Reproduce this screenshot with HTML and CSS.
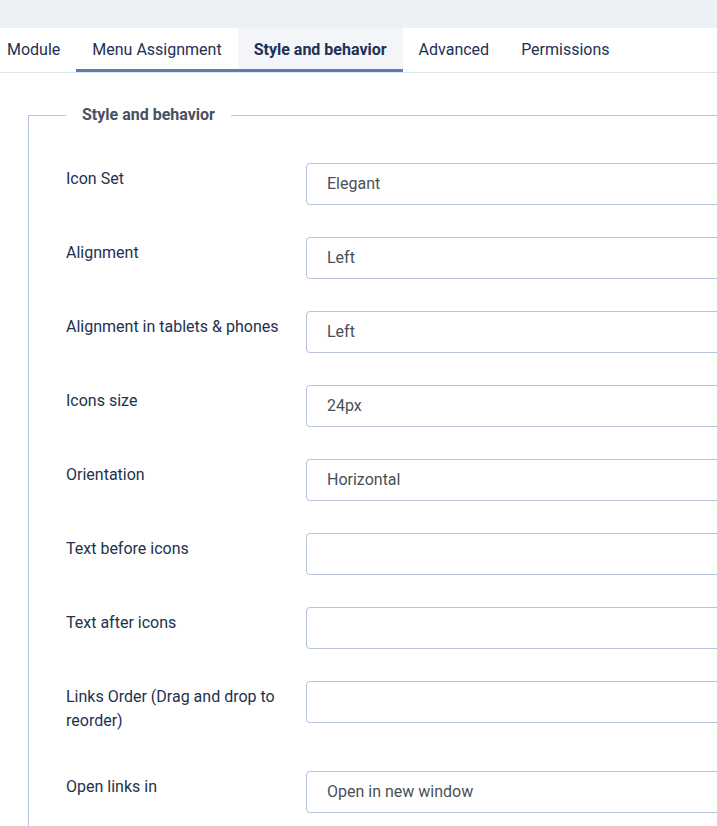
FILE: index.html
```html
<!DOCTYPE html>
<html lang="en">
<head>
    <meta charset="UTF-8">
    <title>Module - Style and behavior</title>
    <link rel="stylesheet" href="styles.css">
</head>
<body>
    <div class="page">
        <div class="topbar"></div>

        <div class="tabs">
            <a class="tab" href="#">Module</a>
            <a class="tab tab-hover" href="#">Menu Assignment</a>
            <a class="tab tab-active" href="#">Style and behavior</a>
            <a class="tab" href="#">Advanced</a>
            <a class="tab" href="#">Permissions</a>
        </div>

        <div class="tab-content">
            <fieldset class="options-form">
                <legend>Style and behavior</legend>

                <div class="control-group">
                    <label class="control-label">Icon Set</label>
                    <div class="controls">
                        <select class="form-select"><option>Elegant</option></select>
                    </div>
                </div>

                <div class="control-group">
                    <label class="control-label">Alignment</label>
                    <div class="controls">
                        <select class="form-select"><option>Left</option></select>
                    </div>
                </div>

                <div class="control-group">
                    <label class="control-label">Alignment in tablets &amp; phones</label>
                    <div class="controls">
                        <select class="form-select"><option>Left</option></select>
                    </div>
                </div>

                <div class="control-group">
                    <label class="control-label">Icons size</label>
                    <div class="controls">
                        <select class="form-select"><option>24px</option></select>
                    </div>
                </div>

                <div class="control-group">
                    <label class="control-label">Orientation</label>
                    <div class="controls">
                        <select class="form-select"><option>Horizontal</option></select>
                    </div>
                </div>

                <div class="control-group">
                    <label class="control-label">Text before icons</label>
                    <div class="controls">
                        <input class="form-control" type="text">
                    </div>
                </div>

                <div class="control-group">
                    <label class="control-label">Text after icons</label>
                    <div class="controls">
                        <input class="form-control" type="text">
                    </div>
                </div>

                <div class="control-group">
                    <label class="control-label">Links Order (Drag and drop to reorder)</label>
                    <div class="controls">
                        <div class="sortable-list"></div>
                    </div>
                </div>

                <div class="control-group">
                    <label class="control-label">Open links in</label>
                    <div class="controls">
                        <select class="form-select"><option>Open in new window</option></select>
                    </div>
                </div>
            </fieldset>
        </div>
    </div>
</body>
</html>
```

FILE: styles.css
```css
*{ margin: 0; padding: 0; box-sizing: border-box; }
html, body{ overflow: hidden; background: #fff; }
body{ font-family: Roboto, "Liberation Sans", sans-serif; font-size: 16px; line-height: 24px; color: #22324e; }

.page{ width: 1100px; min-height: 900px; }
.topbar{ height: 28px; background: #edf1f6; }

/* tabs */
.tabs{ display: flex; padding-left: 0; border-bottom: 1px solid #dde3ec; }
.tabs .tab:first-child{ margin-left: -9px; }
.tab{ display: block; height: 44px; padding: 2px 16px 0; line-height: 40px; color: #1d3155; text-decoration: none; border-bottom: 3px solid transparent; }
.tab-hover{ border-bottom-color: #5a7db6; }
.tab-active{ font-weight: bold; background: #f3f5f9; border-bottom-color: #5a7db6; }

/* fieldset */
.tab-content{ padding: 30px 0 0 28px; }
.options-form{ border: 1px solid #b6c5de; padding: 36px 37px 37px; }
.options-form legend{ padding: 0 16px; font-weight: bold; color: #495060; line-height: 24px; }

.control-group{ display: flex; margin-bottom: 32px; }
.control-label{ flex: 0 0 240px; padding: 4px 20px 6px 0; line-height: 24px; color: #22324e; }
.controls{ flex: 1; }

.form-select, .form-control, .sortable-list{
    display: block; width: 100%; height: 42px;
    padding: 0 20px;
    font-family: Roboto, "Liberation Sans", sans-serif; font-size: 16px; color: #4a4f57;
    background: #fff; border: 1px solid #b5c2d9; border-radius: 4px;
    -webkit-appearance: none; appearance: none; outline: none;
}
.form-select{ padding-bottom: 2px; }
```
